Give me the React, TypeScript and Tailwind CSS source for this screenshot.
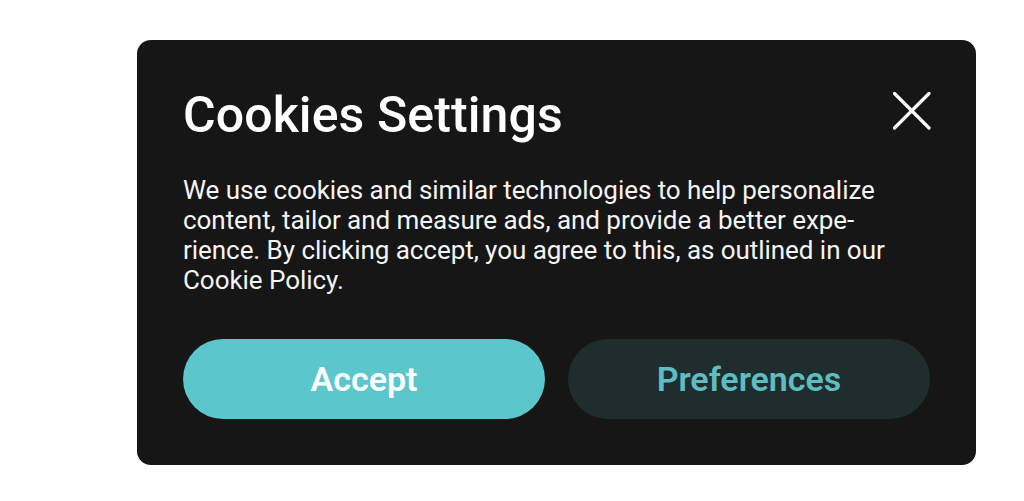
import React from 'react';

const CloseIcon = () => (
    <svg width="38" height="38" viewBox="0 0 38 38" fill="none" className="mt-[6px] -mr-[1px] shrink-0">
        <path d="M1.5 1.5 L36 36 M36 1.5 L1.5 36" stroke="#ffffff" strokeWidth="3.2" strokeLinecap="round" />
    </svg>
);

export default function App() {
    return (
        <div className="min-h-screen bg-white pt-[40px] pl-[137px]" style={{ fontFamily: 'Roboto, "Noto Sans", sans-serif' }}>
            <div className="w-[839px] h-[425px] rounded-[14px] bg-[#161616] px-[46px] pt-[46px] pb-[46px] flex flex-col">

                {/* Header */}
                <div className="flex items-start justify-between">
                    <h1 className="text-[50px] leading-[58px] font-medium text-white tracking-[0.1px]">Cookies Settings</h1>
                    <button aria-label="Close"><CloseIcon /></button>
                </div>

                {/* Body */}
                <p className="mt-[31px] text-[26px] leading-[30px] text-[#f4f4f4] whitespace-nowrap tracking-[-0.05px]">
                    We use cookies and similar technologies to help personalize<br />
                    content, tailor and measure ads, and provide a better expe-<br />
                    rience. By clicking accept, you agree to this, as outlined in our<br />
                    Cookie Policy.
                </p>

                {/* Actions */}
                <div className="mt-[44px] flex gap-[23px]">
                    <button className="flex-1 h-[80px] rounded-full bg-[#5bc6cb] text-white text-[34px] font-semibold">
                        Accept
                    </button>
                    <button className="flex-1 h-[80px] rounded-full bg-[#202d2e] text-[#5ebdc0] text-[34px] font-semibold">
                        Preferences
                    </button>
                </div>
            </div>
        </div>
    );
}
